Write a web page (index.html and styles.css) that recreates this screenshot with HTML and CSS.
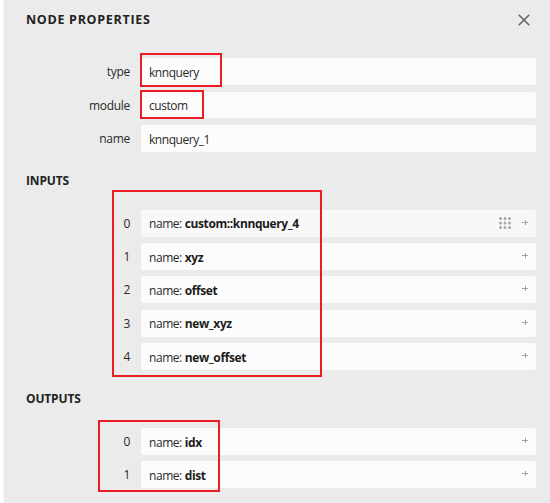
FILE: index.html
```html
<!DOCTYPE html>
<html lang="en">
<head>
<meta charset="utf-8">
<title>Node Properties</title>
<link rel="stylesheet" href="styles.css">
</head>
<body>
<aside class="panel">
  <header class="header">
    <h1 class="title">NODE PROPERTIES</h1>
    <svg class="close" viewBox="0 0 12 12"><path d="M.7.7 11.3 11.3M11.3.7.7 11.3"/></svg>
  </header>
  <section class="rows attributes">
    <div class="row"><span class="label">type</span><div class="field"><span>knnquery</span></div></div>
    <div class="row"><span class="label">module</span><div class="field"><span>custom</span></div></div>
    <div class="row"><span class="label">name</span><div class="field"><span>knnquery_1</span></div></div>
  </section>
  <h2 class="heading inputs-heading">INPUTS</h2>
  <section class="rows inputs">
    <div class="row"><span class="label">0</span><div class="field hover"><span class="key">name:</span><b>custom::knnquery_4</b><svg class="grid" viewBox="0 0 12 12"><path d="M1.5 1.5h0M6 1.5h0M10.5 1.5h0M1.5 6h0M6 6h0M10.5 6h0M1.5 10.5h0M6 10.5h0M10.5 10.5h0"/></svg><svg class="plus" viewBox="0 0 6 5"><path d="M0 2.5h6M3.5 0v5"/></svg></div></div>
    <div class="row"><span class="label">1</span><div class="field"><span class="key">name:</span><b>xyz</b><svg class="plus" viewBox="0 0 6 5"><path d="M0 2.5h6M3.5 0v5"/></svg></div></div>
    <div class="row"><span class="label">2</span><div class="field"><span class="key">name:</span><b>offset</b><svg class="plus" viewBox="0 0 6 5"><path d="M0 2.5h6M3.5 0v5"/></svg></div></div>
    <div class="row"><span class="label">3</span><div class="field"><span class="key">name:</span><b>new_xyz</b><svg class="plus" viewBox="0 0 6 5"><path d="M0 2.5h6M3.5 0v5"/></svg></div></div>
    <div class="row"><span class="label">4</span><div class="field"><span class="key">name:</span><b>new_offset</b><svg class="plus" viewBox="0 0 6 5"><path d="M0 2.5h6M3.5 0v5"/></svg></div></div>
  </section>
  <h2 class="heading outputs-heading">OUTPUTS</h2>
  <section class="rows outputs">
    <div class="row"><span class="label">0</span><div class="field"><span class="key">name:</span><b>idx</b><svg class="plus" viewBox="0 0 6 5"><path d="M0 2.5h6M3.5 0v5"/></svg></div></div>
    <div class="row"><span class="label">1</span><div class="field"><span class="key">name:</span><b>dist</b><svg class="plus" viewBox="0 0 6 5"><path d="M0 2.5h6M3.5 0v5"/></svg></div></div>
  </section>
</aside>
<div class="mark mark-type"></div>
<div class="mark mark-module"></div>
<div class="mark mark-inputs"></div>
<div class="mark mark-outputs"></div>
</body>
</html>
```
FILE: styles.css
```css
* { box-sizing: border-box; }
body {
  margin: 0;
  height: 503px;
  padding-left: 3px;
  overflow: hidden;
  position: relative;
  background: #fff;
  color: #2a2a2a;
  font: 12px/18px "Open Sans", "Noto Sans", sans-serif;
}
.panel {
  height: 503px;
  padding: 11px 14px 0 22px;
  background: #ebebeb;
  border-left: 1px solid #f3f3f3;
}
.header { display: flex; justify-content: space-between; height: 47.3px; }
.title { margin: 0; font-size: 12.5px; line-height: 18px; font-weight: 700; letter-spacing: .7px; color: #222; }
.close { width: 12px; height: 12px; margin: 3px 6px 0 0; fill: none; stroke: #666; stroke-width: 1.6; }
.rows { display: flex; flex-direction: column; gap: 6.33px; }
.row { display: flex; height: 27px; }
.attributes .row { height: 26.7px; }
.attributes { gap: 6.63px; }
.label { width: 104px; margin-right: 11px; padding-top: 5px; text-align: right; letter-spacing: -.3px; }
.field { flex: 1; display: flex; align-items: center; padding: 2.7px 8px 0; background: #fcfcfc; border-radius: 2px; letter-spacing: -.45px; }
.field.hover { background: #f8f8f8; }
.key { margin-right: 3px; }
.field b { font-weight: 700; color: #1c1c1c; letter-spacing: -.4px; }
.heading { margin: 0; font-size: 12px; line-height: 18px; font-weight: 700; letter-spacing: -.15px; color: #222; }
.inputs-heading { padding: 20.3px 0 19.7px; }
.outputs-heading { padding: 20px 0 20px; }
.plus { width: 6px; height: 5px; margin: -4.6px 0 0 auto; fill: none; stroke: #a2a2a2; stroke-width: 1; }
.grid { width: 12px; height: 12px; margin: -2.6px 11px 0 auto; fill: none; stroke: #a8a8a8; stroke-width: 3; stroke-linecap: round; }
.grid + .plus { margin-left: 0; }
.mark { position: absolute; border: 2px solid #ed1c24; }
.mark-type { left: 140px; top: 53px; width: 82px; height: 34px; }
.mark-module { left: 140px; top: 90px; width: 64px; height: 29px; }
.mark-inputs { left: 112px; top: 190px; width: 210px; height: 187px; }
.mark-outputs { left: 98px; top: 420px; width: 122px; height: 72px; }
```
